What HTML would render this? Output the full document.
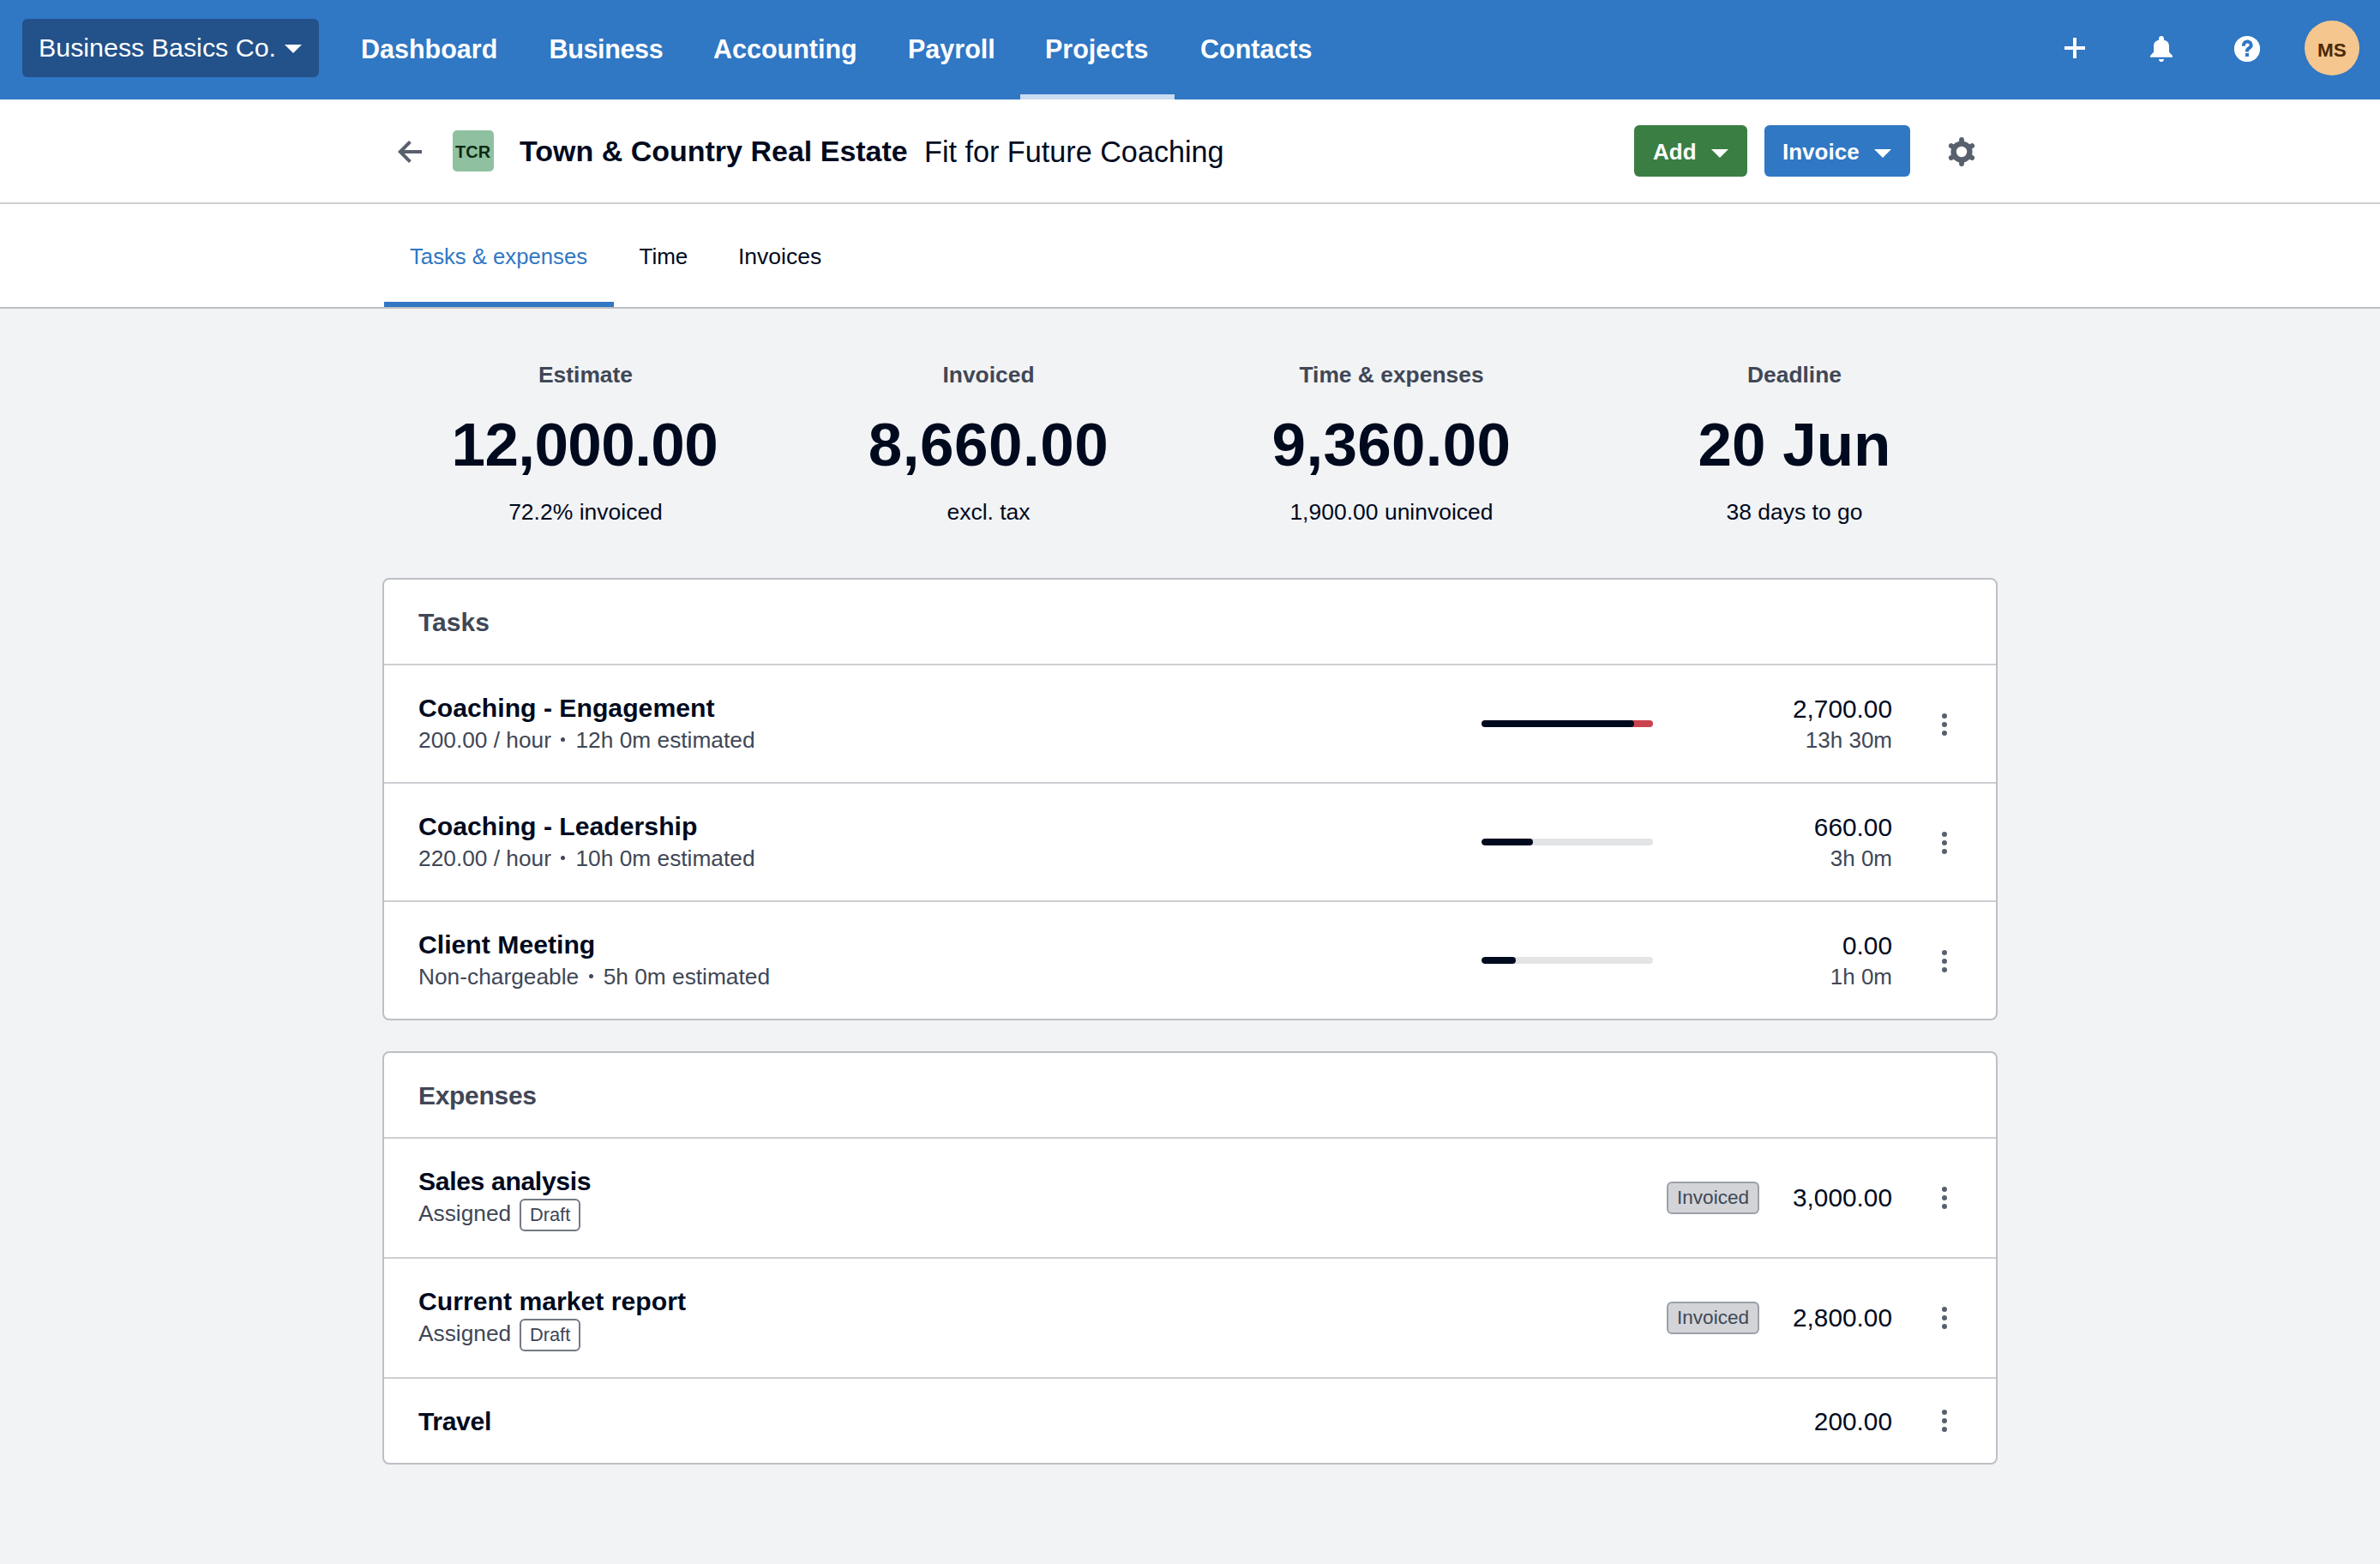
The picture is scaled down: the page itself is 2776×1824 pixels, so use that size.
<!DOCTYPE html>
<html>
<head>
<meta charset="utf-8">
<style>
*{margin:0;padding:0;box-sizing:border-box;}
html,body{width:2776px;height:1824px;overflow:hidden;background:#f2f3f5;}
body{font-family:"Liberation Sans",sans-serif;color:#000a1e;position:relative;}
.a{position:absolute;white-space:nowrap;}
/* nav */
#nav{position:absolute;left:0;top:0;width:2776px;height:116px;background:#3077c4;}
#org{position:absolute;left:26px;top:22px;width:346px;height:68px;background:#23518a;border-radius:6px;}
#org .t{position:absolute;left:19px;top:18.4px;font-size:30.4px;line-height:30px;color:#fff;}
.caret{position:absolute;width:0;height:0;border-left:10px solid transparent;border-right:10px solid transparent;border-top:10px solid #fff;}
.nv{position:absolute;top:42px;font-size:30.5px;line-height:30px;font-weight:700;color:#fff;}
#ul{position:absolute;left:1190px;top:110px;width:180px;height:6px;background:#cadcf0;}
/* header */
#hdr{position:absolute;left:0;top:116px;width:2776px;height:122px;background:#fff;border-bottom:2px solid #ccced2;}
#tabs{position:absolute;left:0;top:238px;width:2776px;height:122px;background:#fff;border-bottom:2px solid #bdbfc4;}
.btn{position:absolute;top:146px;height:60px;border-radius:6px;}
.btn .t{position:absolute;top:18px;font-size:26px;line-height:26px;font-weight:700;color:#fff;}
.tab{position:absolute;top:286px;font-size:26px;line-height:26px;color:#000a1e;}
/* stats */
.stat{position:absolute;width:470px;text-align:center;}
.stat .l{position:absolute;left:0;width:470px;top:424px;font-size:26.4px;line-height:26px;font-weight:700;color:#404756;}
.stat .n{position:absolute;left:0;width:470px;top:483px;font-size:71px;line-height:71px;font-weight:700;color:#000a1e;}
.stat .s{position:absolute;left:0;width:470px;top:584px;font-size:26.5px;line-height:26px;color:#000a1e;}
/* cards */
.card{position:absolute;left:446px;width:1884px;background:#fff;border:2px solid #bdbfc4;border-radius:8px;overflow:hidden;}
.ch{position:absolute;left:0;top:0;width:1880px;height:100px;border-bottom:2px solid #ccced2;}
.ch .t{position:absolute;left:40px;top:35px;font-size:30px;line-height:30px;font-weight:700;color:#404756;}
.row{position:absolute;left:0;width:1880px;border-bottom:2px solid #ccced2;}
.row.last{border-bottom:none;}
.rt{position:absolute;left:40px;top:34.6px;font-size:30.2px;line-height:30px;font-weight:700;color:#000a1e;white-space:nowrap;}
.rs{position:absolute;left:40px;top:73.6px;font-size:26.3px;line-height:26px;color:#404756;white-space:nowrap;}
.amt{position:absolute;right:121px;font-size:29.8px;line-height:30px;color:#000a1e;text-align:right;white-space:nowrap;}
.amts{position:absolute;right:121px;font-size:26px;line-height:26px;color:#404756;text-align:right;white-space:nowrap;}
.bar{position:absolute;left:1280px;width:200px;height:8px;border-radius:4px;background:#e3e4e6;overflow:hidden;}
.bar i{position:absolute;left:0;top:0;height:8px;border-radius:4px;background:#000a1e;}
.keb{position:absolute;left:1817px;width:6px;height:26px;}
.keb i{position:absolute;left:0;width:6px;height:6px;border-radius:3px;background:#59606d;}
.dot{display:inline-block;width:5px;height:5px;border-radius:3px;background:#404756;margin:0 12px 0 11.5px;vertical-align:6.5px;}
.draft{position:absolute;height:38px;border:2px solid #737985;border-radius:6px;font-size:21.8px;line-height:33px;color:#404756;padding:0 10px 0 10px;}
.inv{position:absolute;left:1496px;width:108px;height:38px;border:2px solid #9ba0a8;background:#d2d4d8;border-radius:6px;font-size:22.6px;line-height:33px;color:#404756;text-align:center;}
</style>
</head>
<body>
<div id="nav">
  <div id="org"><span class="t">Business Basics Co.</span><span class="caret" style="left:306px;top:30px;"></span></div>
  <span class="nv" style="left:421px">Dashboard</span>
  <span class="nv" style="left:640.5px;letter-spacing:-0.35px">Business</span>
  <span class="nv" style="left:832px">Accounting</span>
  <span class="nv" style="left:1059px">Payroll</span>
  <span class="nv" style="left:1219px">Projects</span>
  <span class="nv" style="left:1400px">Contacts</span>
  <div id="ul"></div>
</div>
<div id="hdr"></div>
<div id="tabs"></div>

<!-- right nav icons -->
<svg class="a" style="left:2400px;top:36px" width="40" height="40" viewBox="0 0 40 40"><rect x="18" y="8" width="4" height="24" fill="#fff"/><rect x="8" y="18" width="24" height="4" fill="#fff"/></svg>
<svg class="a" style="left:2496px;top:36px" width="50" height="50" viewBox="0 0 50 50"><path d="M12 30.85 L12 29.6 Q12 29 12.5 28.5 L16 24.7 L16 18 C16 13.8 18.3 11.5 22 10.7 L22 9 C22 7 23.3 5.9 25 5.9 C26.7 5.9 28 7 28 9 L28 10.7 C31.7 11.5 34 13.8 34 18 L34 24.7 L37.5 28.5 Q38 29 38 29.6 L38 30.85 Z" fill="#fff"/><path d="M22 33 L28 33 C28 35 26.6 36.1 25 36.1 C23.4 36.1 22 35 22 33 Z" fill="#fff"/></svg>
<svg class="a" style="left:2596px;top:32px" width="50" height="50" viewBox="0 0 50 50"><circle cx="25" cy="25" r="15.1" fill="#fff"/><path d="M20.9 21.7 L20.9 20.8 A4.4 4.4 0 0 1 29.7 20.8 C29.7 23.2 27.5 23.8 26 25 C25.2 25.7 24.9 26.5 24.9 28.5" fill="none" stroke="#3077c4" stroke-width="4"/><rect x="23" y="30" width="4" height="4" fill="#3077c4"/></svg>
<div class="a" style="left:2688px;top:24px;width:64px;height:64px;border-radius:32px;background:#f5c68e;"></div>
<span class="a" style="left:2703px;top:48.3px;font-size:22.5px;line-height:22px;font-weight:700;color:#4a2a06;">MS</span>

<!-- header -->
<svg class="a" style="left:454px;top:150px" width="50" height="50" viewBox="0 0 50 50"><path d="M24.4 15.4 L12.8 27 L24.4 38.6 M13 27 L38 27" fill="none" stroke="#59606d" stroke-width="4"/></svg>
<div class="a" style="left:528px;top:152px;width:48px;height:48px;border-radius:5px;background:#8fc1a0;"></div>
<span class="a" style="left:531px;top:167.4px;font-size:20px;line-height:20px;font-weight:700;color:#0d2a14;">TCR</span>
<span class="a" style="left:606px;top:159.2px;font-size:34px;line-height:34px;font-weight:700;color:#000a1e;">Town &amp; Country Real Estate</span>
<span class="a" style="left:1078px;top:160.2px;font-size:34.2px;line-height:34px;color:#000a1e;">Fit for Future Coaching</span>
<div class="btn" style="left:1906px;width:132px;background:#3a7e44;"><span class="t" style="left:22px">Add</span><span class="caret" style="left:90px;top:28px;"></span></div>
<div class="btn" style="left:2058px;width:170px;background:#3077c4;"><span class="t" style="left:21px">Invoice</span><span class="caret" style="left:128px;top:28px;"></span></div>
<svg class="a" style="left:2258px;top:147px" width="60" height="60" viewBox="0 0 60 60"><g transform="translate(30 30)" stroke="#59606d" stroke-width="5.8" stroke-linecap="round"><line x1="0" y1="0" x2="0" y2="-14.1"/><line x1="0" y1="0" x2="0" y2="14.1"/><line x1="0" y1="0" x2="12.2" y2="-7.05"/><line x1="0" y1="0" x2="-12.2" y2="-7.05"/><line x1="0" y1="0" x2="12.2" y2="7.05"/><line x1="0" y1="0" x2="-12.2" y2="7.05"/></g><circle cx="30" cy="30" r="12.6" fill="#59606d"/><circle cx="30" cy="30" r="6.2" fill="#fff"/></svg>

<!-- tabs -->
<span class="tab" style="left:478px;color:#3077c4;font-size:25.7px;">Tasks &amp; expenses</span>
<div class="a" style="left:448px;top:352px;width:268px;height:6px;background:#3077c4;"></div>
<span class="tab" style="left:745.5px;">Time</span>
<span class="tab" style="left:861px;font-size:26.5px;">Invoices</span>

<!-- stats -->
<div class="stat" style="left:448px;top:0"><div class="l">Estimate</div><div class="n" style="letter-spacing:-0.6px;margin-left:-1.2px">12,000.00</div><div class="s">72.2% invoiced</div></div>
<div class="stat" style="left:918px;top:0"><div class="l">Invoiced</div><div class="n" style="letter-spacing:0.5px">8,660.00</div><div class="s">excl. tax</div></div>
<div class="stat" style="left:1388px;top:0"><div class="l">Time &amp; expenses</div><div class="n" style="letter-spacing:0.3px">9,360.00</div><div class="s">1,900.00 uninvoiced</div></div>
<div class="stat" style="left:1858px;top:0"><div class="l">Deadline</div><div class="n">20 Jun</div><div class="s">38 days to go</div></div>

<!-- tasks card -->
<div class="card" style="top:674px;height:516px;">
  <div class="ch"><span class="t">Tasks</span></div>
  <div class="row" style="top:100px;height:138px;">
    <span class="rt">Coaching - Engagement</span>
    <span class="rs">200.00 / hour<i class="dot"></i>12h 0m estimated</span>
    <div class="bar" style="top:64px;background:#c9434e;"><i style="width:178px"></i></div>
    <span class="amt" style="top:35.6px">2,700.00</span>
    <span class="amts" style="top:73.5px">13h 30m</span>
    <div class="keb" style="top:56px"><i style="top:0"></i><i style="top:10px"></i><i style="top:20px"></i></div>
  </div>
  <div class="row" style="top:238px;height:138px;">
    <span class="rt">Coaching - Leadership</span>
    <span class="rs">220.00 / hour<i class="dot"></i>10h 0m estimated</span>
    <div class="bar" style="top:64px;"><i style="width:60px"></i></div>
    <span class="amt" style="top:35.6px">660.00</span>
    <span class="amts" style="top:73.5px">3h 0m</span>
    <div class="keb" style="top:56px"><i style="top:0"></i><i style="top:10px"></i><i style="top:20px"></i></div>
  </div>
  <div class="row last" style="top:376px;height:136px;">
    <span class="rt">Client Meeting</span>
    <span class="rs">Non-chargeable<i class="dot"></i>5h 0m estimated</span>
    <div class="bar" style="top:64px;"><i style="width:40px"></i></div>
    <span class="amt" style="top:35.6px">0.00</span>
    <span class="amts" style="top:73.5px">1h 0m</span>
    <div class="keb" style="top:56px"><i style="top:0"></i><i style="top:10px"></i><i style="top:20px"></i></div>
  </div>
</div>

<!-- expenses card -->
<div class="card" style="top:1226px;height:482px;">
  <div class="ch"><span class="t" style="letter-spacing:-0.3px">Expenses</span></div>
  <div class="row" style="top:100px;height:140px;">
    <span class="rt" style="letter-spacing:-0.38px">Sales analysis</span>
    <span class="rs">Assigned</span>
    <span class="draft" style="left:158px;top:69.5px;">Draft</span>
    <span class="inv" style="top:50px;">Invoiced</span>
    <span class="amt" style="top:53.8px">3,000.00</span>
    <div class="keb" style="top:56px"><i style="top:0"></i><i style="top:10px"></i><i style="top:20px"></i></div>
  </div>
  <div class="row" style="top:240px;height:140px;">
    <span class="rt">Current market report</span>
    <span class="rs">Assigned</span>
    <span class="draft" style="left:158px;top:69.5px;">Draft</span>
    <span class="inv" style="top:50px;">Invoiced</span>
    <span class="amt" style="top:53.8px">2,800.00</span>
    <div class="keb" style="top:56px"><i style="top:0"></i><i style="top:10px"></i><i style="top:20px"></i></div>
  </div>
  <div class="row last" style="top:380px;height:98px;">
    <span class="rt" style="letter-spacing:-0.4px">Travel</span>
    <span class="amt" style="top:34.8px">200.00</span>
    <div class="keb" style="top:36px"><i style="top:0"></i><i style="top:10px"></i><i style="top:20px"></i></div>
  </div>
</div>
</body>
</html>
